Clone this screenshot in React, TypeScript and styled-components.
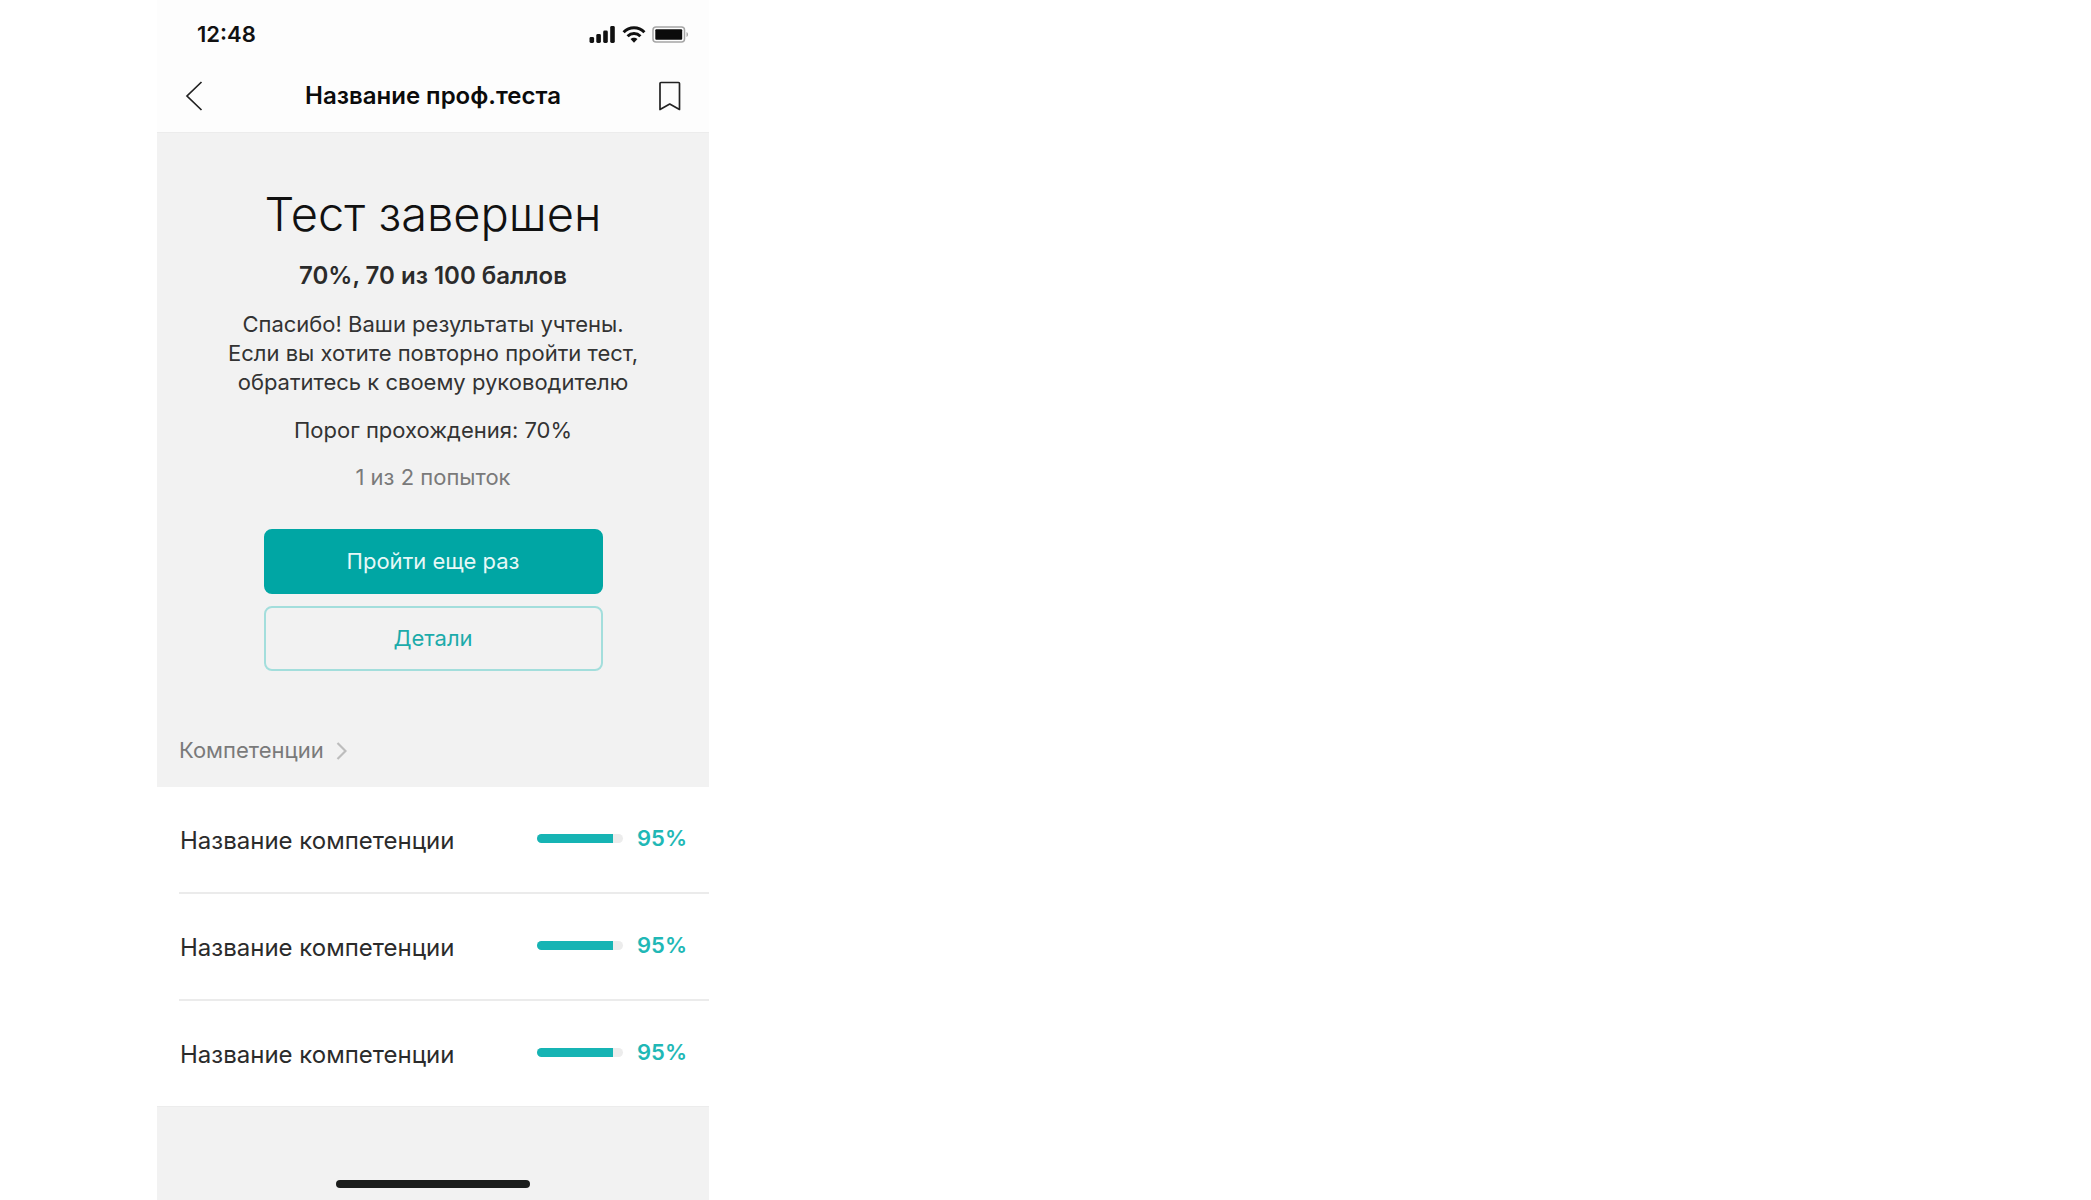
import React from 'react';
import styled, { createGlobalStyle } from 'styled-components';

const GlobalStyle = createGlobalStyle`
  *, *::before, *::after { box-sizing: border-box; }
  body {
    margin: 0;
    background: #fff;
    color: #2b2b2b;
    font-family: Inter, "Noto Sans", sans-serif;
    font-size: 22px;
    line-height: 29px;
  }
  h1, h2, p, ul { margin: 0; padding: 0; }
  button { font: inherit; cursor: pointer; }
`;

const Page = styled.main`
  display: flex;
  min-height: 100vh;
  padding-left: 157px;
`;

const Phone = styled.div`
  flex: 1;
  max-width: 552px;
  display: flex;
  flex-direction: column;
  background: #f2f2f2;
`;

const StatusBar = styled.div`
  display: flex;
  align-items: center;
  justify-content: space-between;
  height: 60px;
  padding: 9px 20px 0 40px;
  background: #fdfdfd;
  color: #111;
  font-weight: 600;
`;

const StatusIcons = styled.div`
  display: flex;
  align-items: center;
  gap: 6px;
  svg { display: block; }
`;

const NavBar = styled.header`
  display: flex;
  align-items: center;
  justify-content: space-between;
  height: 73px;
  padding: 0 28px;
  background: #fdfdfd;
  border-bottom: 1px solid #ececec;
`;

const NavTitle = styled.h1`
  color: #0b0b0b;
  font-size: 24px;
  line-height: 32px;
  font-weight: 600;
`;

const IconButton = styled.button<{ $align: 'start' | 'end' }>`
  display: flex;
  align-items: center;
  justify-content: flex-${(p) => p.$align};
  width: 40px;
  height: 40px;
  padding: 0;
  border: 0;
  background: none;
  color: #222;
`;

const Result = styled.section`
  display: flex;
  flex-direction: column;
  align-items: center;
  gap: 18px;
  padding: 52px 24px 0;
  text-align: center;
`;

const Headline = styled.h2`
  color: #111;
  font-size: 47px;
  line-height: 57px;
  font-weight: 300;
`;

const Score = styled.p`
  font-size: 24px;
  line-height: 32px;
  font-weight: 600;
`;

const Line = styled.p<{ $muted?: boolean }>`
  color: ${(p) => (p.$muted ? '#7a7a7a' : '#333')};
`;

const Message = styled(Line)`
  padding-bottom: 1px;
`;

const Actions = styled.div`
  display: grid;
  gap: 12px;
  width: 100%;
  max-width: 339px;
  margin-top: 19px;
`;

const Action = styled.button<{ $primary?: boolean }>`
  height: 65px;
  border: 2px solid ${(p) => (p.$primary ? '#00a6a4' : '#a3dedc')};
  border-radius: 8px;
  background: ${(p) => (p.$primary ? '#00a6a4' : 'transparent')};
  color: ${(p) => (p.$primary ? '#e6f8f7' : '#1cabaa')};
`;

const SectionLink = styled.a`
  display: flex;
  align-items: center;
  align-self: flex-start;
  gap: 12px;
  padding: 65px 22px 22px;
  color: #7a7a7a;
  text-decoration: none;
`;

const List = styled.ul`
  list-style: none;
  background: #fff;
`;

const Row = styled.li`
  display: flex;
  align-items: center;
  justify-content: space-between;
  box-sizing: content-box;
  height: 105px;
  margin-left: 22px;
  padding: 0 22px 0 1px;
  &:not(:last-child) { border-bottom: 2px solid #ebebeb; }
`;

const Name = styled.span`
  padding-top: 2px;
  font-size: 24px;
  line-height: 32px;
`;

const Meter = styled.div`
  display: flex;
  align-items: center;
  gap: 14px;
  padding-bottom: 3px;
  color: #1fb8b6;
  font-weight: 600;
`;

const Track = styled.div`
  width: 86px;
  height: 9px;
  border-radius: 5px;
  overflow: hidden;
  background: #ececec;
`;

const Fill = styled.div`
  height: 100%;
  background: #16b4b4;
`;

const HomeArea = styled.footer`
  display: flex;
  flex: 1;
  align-items: flex-end;
  justify-content: center;
  min-height: 90px;
  padding-bottom: 12px;
  border-top: 1px solid #ececec;
`;

const HomeIndicator = styled.div`
  width: 194px;
  height: 8px;
  border-radius: 4px;
  background: #1b1d1c;
`;

const competencies = [
  { id: 1, name: 'Название компетенции', score: 95, fill: 88 },
  { id: 2, name: 'Название компетенции', score: 95, fill: 88 },
  { id: 3, name: 'Название компетенции', score: 95, fill: 88 },
];

const SignalIcon = () => (
  <svg width="27" height="17" viewBox="0 0 27 17" fill="#111" aria-hidden="true">
    <rect x="0.5" y="11" width="4.6" height="6" rx="1.4" />
    <rect x="7.3" y="8" width="4.6" height="9" rx="1.4" />
    <rect x="14.2" y="4.5" width="4.6" height="12.5" rx="1.4" />
    <rect x="21.2" y="0" width="4.6" height="17" rx="1.4" />
  </svg>
);

const WifiIcon = () => (
  <svg width="24" height="17" viewBox="0 0 24 17" fill="none" stroke="#111" strokeWidth="3" aria-hidden="true">
    <path d="M1.6 6.2C7.4 .3 16.6 .3 22.4 6.2" />
    <path d="M5.6 10.2c3.6-3.6 9.2-3.6 12.8 0" />
    <path d="M8.5 13.1c2-1.9 5-1.9 7 0L12 16.7z" fill="#111" stroke="none" />
  </svg>
);

const BatteryIcon = () => (
  <svg width="37" height="17" viewBox="0 0 37 17" aria-hidden="true">
    <rect x="1" y="1" width="31.500" height="15" rx="3" fill="none" stroke="#a5a5a5" strokeWidth="1.5" />
    <rect x="3.3" y="3.3" width="26.900" height="10.4" rx="1" fill="#0b0b0b" />
    <path d="M34.500 6c2 .8 2 4.2 0 5z" fill="#a5a5a5" />
  </svg>
);

const BackIcon = () => (
  <svg width="18" height="30" viewBox="0 0 18 30" fill="none" stroke="currentColor" strokeWidth="1.7" aria-hidden="true">
    <path d="M16.500 1 2 15l14.500 14" />
  </svg>
);

const BookmarkIcon = () => (
  <svg width="22" height="30" viewBox="0 0 22 30" fill="none" stroke="currentColor" strokeWidth="1.7" strokeLinejoin="round" aria-hidden="true">
    <path d="M2 1.500h17.500q1 0 1 1v26L10.750 23 1 28.500v-26q0-1 1-1z" />
  </svg>
);

const ChevronIcon = () => (
  <svg width="11" height="18" viewBox="0 0 11 18" fill="none" stroke="#bdbdbd" strokeWidth="2.2" aria-hidden="true">
    <path d="m1.500 1 8 8-8 8" />
  </svg>
);

export default function App() {
  return (
    <>
      <GlobalStyle />
      <Page>
        <Phone>
          <StatusBar>
            <span>12:48</span>
            <StatusIcons>
              <SignalIcon />
              <WifiIcon />
              <BatteryIcon />
            </StatusIcons>
          </StatusBar>
          <NavBar>
            <IconButton type="button" $align="start" aria-label="Назад"><BackIcon /></IconButton>
            <NavTitle>Название проф.теста</NavTitle>
            <IconButton type="button" $align="end" aria-label="В закладки"><BookmarkIcon /></IconButton>
          </NavBar>
          <Result>
            <Headline>Тест завершен</Headline>
            <Score>70%, 70 из 100 баллов</Score>
            <Message>
              Спасибо! Ваши результаты учтены.<br />
              Если вы хотите повторно пройти тест,<br />
              обратитесь к своему руководителю
            </Message>
            <Line>Порог прохождения: 70%</Line>
            <Line $muted>1 из 2 попыток</Line>
            <Actions>
              <Action type="button" $primary>Пройти еще раз</Action>
              <Action type="button">Детали</Action>
            </Actions>
          </Result>
          <SectionLink href="#competencies">
            Компетенции
            <ChevronIcon />
          </SectionLink>
          <List id="competencies">
            {competencies.map((c) => (
              <Row key={c.id}>
                <Name>{c.name}</Name>
                <Meter>
                  <Track><Fill style={{ width: `${c.fill}%` }} /></Track>
                  <span>{c.score}%</span>
                </Meter>
              </Row>
            ))}
          </List>
          <HomeArea><HomeIndicator /></HomeArea>
        </Phone>
      </Page>
    </>
  );
}
